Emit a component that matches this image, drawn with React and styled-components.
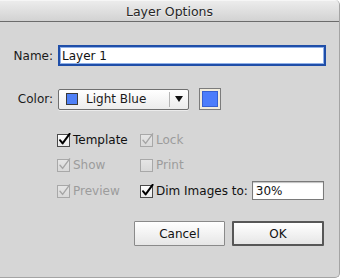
import React from 'react';
import styled, { createGlobalStyle } from 'styled-components';

const GlobalStyle = createGlobalStyle`
  html, body {
    margin: 0;
    padding: 0;
    background: #ffffff;
  }
  body {
    font-family: "DejaVu Sans", "Liberation Sans", sans-serif;
    font-size: 12px;
    color: #1a1a1a;
  }
`;

const Window = styled.div`
  width: 340px;
  height: 278px;
  box-sizing: border-box;
  display: flex;
  flex-direction: column;
  background: #d6d6d6;
  border-right: 1px solid #a4a4a4;
  border-bottom: 1px solid #a4a4a4;
  border-radius: 0 5px 5px 0;
  overflow: hidden;
`;

const TitleBar = styled.div`
  flex: none;
  display: flex;
  align-items: center;
  justify-content: center;
  background: linear-gradient(#ececec, #d2d2d2);
  border-top: 1px solid #f6f6f6;
  border-bottom: 1px solid #6c6c6c;
  box-sizing: border-box;
  height: 22px;
  font-size: 12.5px;
  color: #262626;
  text-shadow: 0 1px 0 rgba(255, 255, 255, 0.6);
`;

const Body = styled.div`
  flex: 1;
  display: flex;
  flex-direction: column;
  padding: 23px 14px 0 12px;
`;

const FieldRow = styled.div`
  display: flex;
  align-items: center;
  gap: 5px;
  margin-bottom: ${p => p.$mb || 0}px;
`;

const Label = styled.label`
  width: 41px;
  text-align: right;
  flex: none;
`;

const TextInput = styled.div`
  box-sizing: border-box;
  height: ${p => p.$h}px;
  width: ${p => p.$w}px;
  flex: none;
  display: flex;
  align-items: center;
  padding-left: ${p => (p.$focused ? 2 : 3)}px;
  background: #ffffff;
  border: ${p => (p.$focused ? '2px solid #1f4ea8' : '1px solid #7a7a7a')};
  box-shadow: ${p =>
    p.$focused ? 'inset 0 0 0 1px #8fb0e8' : 'inset 0 1px 1px rgba(0,0,0,0.25)'};
  color: #111;
`;

const Select = styled.div`
  box-sizing: border-box;
  width: 131px;
  height: 21px;
  display: flex;
  align-items: center;
  border: 1px solid #6f6f6f;
  border-radius: 2px;
  background: linear-gradient(#ffffff, #ececec);
  box-shadow: 0 1px 0 rgba(255, 255, 255, 0.5);
`;

const SelectValue = styled.div`
  flex: 1;
  display: flex;
  align-items: center;
  gap: 8px;
  padding-left: 7px;
`;

const Chip = styled.span`
  width: 10px;
  height: 10px;
  background: #4f80f6;
  border: 1px solid #3a3a3a;
  flex: none;
`;

const SelectArrow = styled.div`
  width: 17px;
  height: 15px;
  border-left: 1px solid #b4b4b4;
  display: flex;
  align-items: center;
  justify-content: center;
  margin-right: 1px;
`;

const Swatch = styled.div`
  box-sizing: border-box;
  width: 22px;
  height: 22px;
  border: 1px solid #7c7c7c;
  padding: 2px;
  background: #f1ecdc;
  margin-left: 5px;
`;

const SwatchFill = styled.div`
  width: 100%;
  height: 100%;
  box-sizing: border-box;
  background: #4c7dfb;
  border: 1px solid #3660d0;
`;

const CheckGrid = styled.div`
  display: grid;
  grid-template-columns: 83px max-content;
  row-gap: 7px;
  margin-top: 21px;
  padding-left: 45px;
  align-items: center;
`;

const CheckItem = styled.div`
  display: flex;
  align-items: center;
  gap: 2px;
  height: 18px;
  white-space: nowrap;
  color: ${p => (p.$disabled ? '#9c9c9c' : '#111111')};
`;

const DimRow = styled.div`
  display: flex;
  align-items: center;
  gap: 4px;
`;

const ButtonRow = styled.div`
  display: flex;
  justify-content: flex-end;
  gap: 7px;
  margin-top: 21px;
  padding-right: 1px;
`;

const Button = styled.button`
  box-sizing: border-box;
  width: ${p => (p.$default ? 92 : 91)}px;
  height: 25px;
  font-family: inherit;
  font-size: 12px;
  color: #111;
  background: linear-gradient(#ffffff, #e6e6e6);
  border: ${p => (p.$default ? '2px solid #575757' : '1px solid #8a8a8a')};
  border-radius: 1px;
  padding: 0;
`;

const CheckBox = ({ checked, disabled }) => {
  const stroke = disabled ? '#a8a8a8' : '#4a4a4a';
  const mark = disabled ? '#a6a6a6' : '#000000';
  const gid = disabled ? 'cbd' : 'cb';
  return (
    <svg width="14" height="14" viewBox="0 0 14 14">
      <defs>
        <linearGradient id={gid} x1="0" y1="0" x2="0" y2="1">
          <stop offset="0" stopColor={disabled ? '#e6e6e6' : '#ffffff'} />
          <stop offset="1" stopColor={disabled ? '#d8d8d8' : '#e8e8e8'} />
        </linearGradient>
      </defs>
      <rect x="0.5" y="1.5" width="12" height="12" fill={`url(#${gid})`} stroke={stroke} />
      {checked && (
        <path
          d="M3 7.2 L5.6 10.4 L12.6 0.8"
          fill="none"
          stroke={mark}
          strokeWidth={disabled ? 1.4 : 2}
          strokeLinecap="round"
          strokeLinejoin="round"
        />
      )}
    </svg>
  );
};

const Check = ({ label, checked, disabled }) => (
  <CheckItem $disabled={disabled}>
    <CheckBox checked={checked} disabled={disabled} />
    <span>{label}</span>
  </CheckItem>
);

export default function App() {
  return (
    <>
      <GlobalStyle />
      <Window>
        <TitleBar>Layer Options</TitleBar>
        <Body>
          <FieldRow $mb={22}>
            <Label>Name:</Label>
            <TextInput $focused $w={268} $h={21}>Layer 1</TextInput>
          </FieldRow>
          <FieldRow>
            <Label>Color:</Label>
            <Select>
              <SelectValue>
                <Chip />
                <span>Light Blue</span>
              </SelectValue>
              <SelectArrow>
                <svg width="8" height="6" viewBox="0 0 8 6">
                  <path d="M0 0 H8 L4 6 Z" fill="#111" />
                </svg>
              </SelectArrow>
            </Select>
            <Swatch>
              <SwatchFill />
            </Swatch>
          </FieldRow>
          <CheckGrid>
            <Check label="Template" checked />
            <Check label="Lock" checked disabled />
            <Check label="Show" checked disabled />
            <Check label="Print" disabled />
            <Check label="Preview" checked disabled />
            <DimRow>
              <Check label="Dim Images to:" checked />
              <TextInput $w={72} $h={19}>30%</TextInput>
            </DimRow>
          </CheckGrid>
          <ButtonRow>
            <Button>Cancel</Button>
            <Button $default>OK</Button>
          </ButtonRow>
        </Body>
      </Window>
    </>
  );
}
